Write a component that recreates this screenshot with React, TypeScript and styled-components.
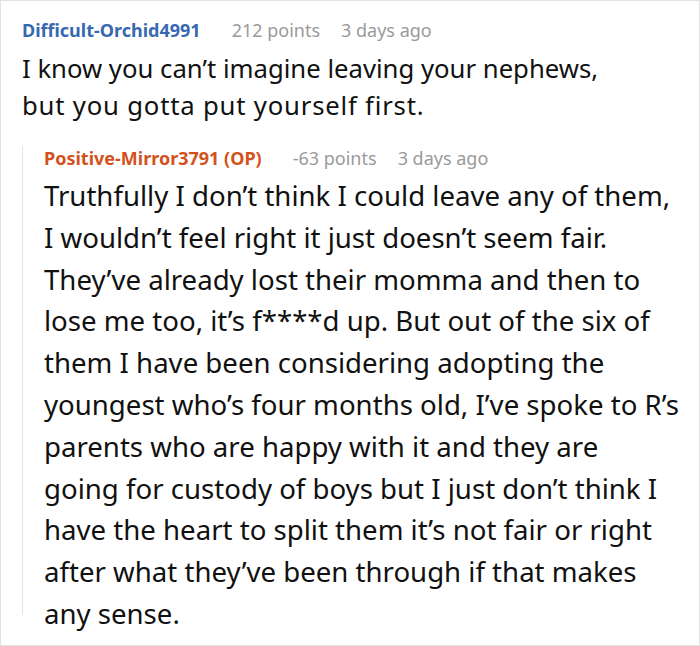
import React from "react";
import styled, { createGlobalStyle } from "styled-components";

const Global = createGlobalStyle`
  html, body { margin: 0; padding: 0; background: #fff; }
  body { font-family: "Noto Sans", "Open Sans", sans-serif; }
`;

const Frame = styled.div`
  box-sizing: border-box;
  width: 700px;
  height: 646px;
  border: 1px solid #e2e2e2;
  padding: 17px 0 0 21px;
  overflow: hidden;
`;

const Meta = styled.div`
  display: flex;
  align-items: baseline;
  font-size: 18px;
  line-height: 24px;
  white-space: nowrap;
`;

const Author = styled.span<{ $tone: "blue" | "orange" }>`
  font-weight: 700;
  color: ${(p) => (p.$tone === "blue" ? "#3769b1" : "#d2521d")};
  margin-right: 31px;
`;

const Stat = styled.span`
  color: #9a9a9a;
  margin-right: 21px;
`;

const Body = styled.div<{ $size: number; $lh: number; $gap: number }>`
  font-size: ${(p) => p.$size}px;
  line-height: ${(p) => p.$lh}px;
  margin-top: ${(p) => p.$gap}px;
  color: #111;
  white-space: nowrap;
`;

const Line = styled.div<{ $track?: number }>`
  letter-spacing: ${(p) => p.$track ?? 0}px;
`;

const Reply = styled.div`
  margin-top: 34px;
  border-left: 1px solid #e4e4e4;
  padding-left: 21px;
  height: 469px;
`;

const ReplyMeta = styled(Meta)`
  margin-top: -12px;
`;

const commentLines: [string, number][] = [
  ["I know you can\u2019t imagine leaving your nephews,", 0],
  ["but you gotta put yourself first.", 0.8],
];

const replyLines = [
  "Truthfully I don\u2019t think I could leave any of them,",
  "I wouldn\u2019t feel right it just doesn\u2019t seem fair.",
  "They\u2019ve already lost their momma and then to",
  "lose me too, it\u2019s f****d up. But out of the six of",
  "them I have been considering adopting the",
  "youngest who\u2019s four months old, I\u2019ve spoke to R\u2019s",
  "parents who are happy with it and they are",
  "going for custody of boys but I just don\u2019t think I",
  "have the heart to split them it\u2019s not fair or right",
  "after what they\u2019ve been through if that makes",
  "any sense.",
];

export default function App() {
  return (
    <>
      <Global />
      <Frame>
        <Meta>
          <Author $tone="blue">Difficult-Orchid4991</Author>
          <Stat>212 points</Stat>
          <Stat>3 days ago</Stat>
        </Meta>
        <Body $size={25.7} $lh={37} $gap={8}>
          {commentLines.map(([l, t]) => (
            <Line key={l} $track={t}>
              {l}
            </Line>
          ))}
        </Body>
        <Reply>
          <ReplyMeta>
            <Author $tone="orange">Positive-Mirror3791 (OP)</Author>
            <Stat>-63 points</Stat>
            <Stat>3 days ago</Stat>
          </ReplyMeta>
          <Body $size={27.6} $lh={41.8} $gap={5}>
            {replyLines.map((l) => (
              <Line key={l}>{l}</Line>
            ))}
          </Body>
        </Reply>
      </Frame>
    </>
  );
}
